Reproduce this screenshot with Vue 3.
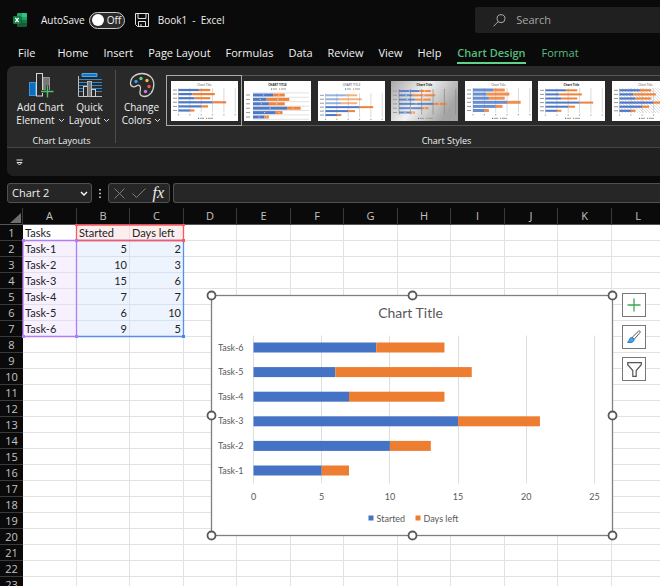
<script setup>
import { ref } from 'vue'

const tabs = ['File', 'Home', 'Insert', 'Page Layout', 'Formulas', 'Data', 'Review', 'View', 'Help', 'Chart Design', 'Format']
const activeTab = ref('Chart Design')
const autoSave = ref(false)

const tasks = [
  { name: 'Task-1', started: 5, left: 2 },
  { name: 'Task-2', started: 10, left: 3 },
  { name: 'Task-3', started: 15, left: 6 },
  { name: 'Task-4', started: 7, left: 7 },
  { name: 'Task-5', started: 6, left: 10 },
  { name: 'Task-6', started: 9, left: 5 },
]
const topDown = [...tasks].reverse()

const columns = 'ABCDEFGHIJKL'.split('')
const rowCount = 23

function cellText(row, col) {
  if (row === 1) return ['Tasks', 'Started', 'Days left'][col] ?? ''
  const task = tasks[row - 2]
  if (!task) return ''
  return [task.name, task.started, task.left][col] ?? ''
}

function cellClass(row, col) {
  return {
    number: row > 1 && (col === 1 || col === 2),
    series: row === 1 && (col === 1 || col === 2),
    category: row > 1 && row < 8 && col === 0,
    values: row > 1 && row < 8 && (col === 1 || col === 2),
  }
}

const unit = 13.64
const ticks = [0, 5, 10, 15, 20, 25]
const handles = [[0, 0], [201, 0], [401, 0], [0, 120], [401, 120], [0, 240], [201, 240], [401, 240]]

const styles = [
  { id: 1, title: 'Chart Title', top: 9, pitch: 4.1, bar: 2.2, x: 7.5, axis: true },
  { id: 2, title: 'CHART TITLE', top: 14, pitch: 4.4, bar: 3, x: 9, bold: true, legendTop: true, rules: true, labels: true },
  { id: 3, title: 'CHART TITLE', top: 14.3, pitch: 3.95, bar: 2, x: 7.5, legendTop: true, axis: true, pale: true },
  { id: 4, title: 'Chart Title', top: 10, pitch: 4.3, bar: 2, x: 8, bold: true, dark: true, labels: true },
  { id: 5, title: 'Chart Title', top: 9, pitch: 4.1, bar: 3, x: 8, axis: true, soft: true },
  { id: 6, title: 'Chart Title', top: 9.3, pitch: 4.1, bar: 2, x: 7.5, bold: true, axis: true },
  { id: 7, title: 'Chart Title', top: 9.3, pitch: 4.1, bar: 2.2, x: 7.5, axis: true, hatch: true },
  { id: 8, title: 'Chart Title', top: 9, pitch: 4.1, bar: 2.2, x: 7.5, axis: true },
]
const activeStyle = ref(1)
</script>

<template>
  <div class="window">
    <header class="titlebar">
      <svg class="app-icon" width="15" height="14" viewBox="0 0 15 14" aria-hidden="true">
        <rect x="4" y="0" width="10" height="14" rx="1" fill="#185c37" />
        <path d="M5 0h4v4H4V1z" fill="#21a366" />
        <path d="M9 0h4a1 1 0 0 1 1 1v3H9z" fill="#33c481" />
        <path d="M4 4h5v3H4z" fill="#107c41" />
        <path d="M9 4h5v3H9z" fill="#21a366" />
        <path d="M9 7h5v3H9z" fill="#107c41" />
        <rect x="0" y="3" width="8" height="8" rx="1" fill="#107c41" />
        <path d="M2.3 4.8l3.4 4.4M5.7 4.8L2.3 9.2" stroke="#fff" stroke-width="1.3" />
      </svg>
      <label class="autosave">
        <span>AutoSave</span>
        <input v-model="autoSave" type="checkbox" />
        <span class="switch"><i></i>{{ autoSave ? 'On' : 'Off' }}</span>
      </label>
      <button class="plain save" aria-label="Save">
        <svg width="14" height="14" viewBox="0 0 14 14" fill="none" stroke="#e2e2e2">
          <path d="M.5 .5h13v13h-11l-2-2zM3 .5v5h8v-5M3.5 13.5v-5h7v5M6 13.5v-2.5" />
        </svg>
      </button>
      <span class="doc">Book1&nbsp; -&nbsp; Excel</span>
      <label class="search">
        <svg width="13" height="13" viewBox="0 0 13 13" fill="none" stroke="#a8a8a8">
          <circle cx="8" cy="4.7" r="4" /><path d="M5.2 7.6L.6 12.3" />
        </svg>
        <input type="search" placeholder="Search" aria-label="Search" />
      </label>
    </header>

    <nav class="tabs">
      <button
        v-for="tab in tabs"
        :key="tab"
        class="plain tab"
        :class="{ active: tab === activeTab, contextual: tab === 'Chart Design' || tab === 'Format' }"
        @click="activeTab = tab"
      >{{ tab }}</button>
    </nav>

    <section class="ribbon">
      <div class="commands">
        <div class="group layouts">
          <div class="tools">
            <button class="plain tool">
              <svg width="26" height="26" viewBox="0 0 26 26" fill="none">
                <rect x="1.5" y="10.5" width="6" height="13" fill="#0f6cbd" stroke="#3a96dd" />
                <path d="M15 5.5h6.5V18H15z" fill="#777" stroke="#999" />
                <rect x="8.5" y="1.5" width="6" height="22.5" fill="#292929" stroke="#d6d6d6" />
                <path d="M19.5 13.5v12M13 19.5h12.5" stroke="#292929" stroke-width="3" />
                <path d="M19.5 13.5v12M13 19.5h12.5" stroke="#4fc26b" stroke-width="1.4" />
              </svg>
              <span>Add Chart</span>
              <span>Element <svg class="caret" width="7" height="5" viewBox="0 0 7 5"><path d="M1 1l2.5 2.5L6 1" /></svg></span>
            </button>
            <button class="plain tool">
              <svg width="26" height="26" viewBox="0 0 26 26" fill="none">
                <path d="M5 1.5h15v3H5z" fill="#1476c6" stroke="#55a9e8" />
                <path d="M2 7.5h23M2 10.5h23M2 13.5h23M2 16.5h23M2 19.5h23" stroke="#3288cf" />
                <path d="M1.5 4v20.5H25" stroke="#bdbdbd" />
                <rect x="6.5" y="14.5" width="4" height="10" fill="#292929" stroke="#cfcfcf" />
                <rect x="10.5" y="9.5" width="4" height="15" fill="#777" stroke="#b5b5b5" />
                <rect x="14.5" y="17.5" width="4" height="7" fill="#292929" stroke="#cfcfcf" />
              </svg>
              <span>Quick</span>
              <span>Layout <svg class="caret" width="7" height="5" viewBox="0 0 7 5"><path d="M1 1l2.5 2.5L6 1" /></svg></span>
            </button>
          </div>
          <p class="caption">Chart Layouts</p>
        </div>

        <div class="group styles">
          <div class="tools">
            <button class="plain tool">
              <svg width="26" height="26" viewBox="0 0 26 26" fill="none">
                <path d="M1.5 11.5C1.5 5.5 6.5 1.5 13 1.5S24.8 6 24.8 12.5c0 7-4.3 12-9.3 12-3.5 0-5-2-4.5-5 .5-2.8 1.5-4.2-.5-6-1.8-1.5-3.5 1.5-5.8 1.3-2-.2-3.2-1.3-3.2-3.3z" stroke="#d0d0d0" stroke-width="1.3" />
                <circle cx="7" cy="9.5" r="1.7" fill="#3a9bf0" />
                <circle cx="12" cy="6.5" r="1.7" fill="#5fd777" />
                <circle cx="18" cy="8.5" r="1.7" fill="#f7b84b" />
                <circle cx="20" cy="14.5" r="1.7" fill="#f0524f" />
                <circle cx="16.5" cy="19.5" r="1.7" fill="#c77ddb" />
              </svg>
              <span>Change</span>
              <span>Colors <svg class="caret" width="7" height="5" viewBox="0 0 7 5"><path d="M1 1l2.5 2.5L6 1" /></svg></span>
            </button>
            <div class="gallery">
              <button
                v-for="s in styles"
                :key="s.id"
                class="plain thumb"
                :class="{ chosen: s.id === activeStyle }"
                :aria-label="'Style ' + s.id"
                @click="activeStyle = s.id"
              >
                <svg width="67" height="40" viewBox="0 0 67 40">
                  <defs v-if="s.dark || s.hatch">
                    <linearGradient v-if="s.dark" id="metal" x1="0" y1="0" x2="1" y2="0.4">
                      <stop offset="0" stop-color="#a8a8a8" /><stop offset=".5" stop-color="#f2f2f2" /><stop offset="1" stop-color="#a4a4a4" />
                    </linearGradient>
                    <pattern v-if="s.hatch" id="hatch" width="3" height="3" patternUnits="userSpaceOnUse">
                      <path d="M0 0l3 3" stroke="#c4c4c4" stroke-width=".6" />
                    </pattern>
                  </defs>
                  <rect width="67" height="40" :fill="s.dark ? 'url(#metal)' : '#fff'" />
                  <rect v-if="s.hatch" x="7.5" y="7" width="59" height="25" fill="url(#hatch)" />
                  <text x="33.5" y="4.5" text-anchor="middle" class="thumb-title" :class="{ bold: s.bold }">{{ s.title }}</text>
                  <g v-if="s.rules" stroke="#d5d5d5" stroke-width=".7">
                    <path v-for="n in 7" :key="n" :d="`M9 ${7.5 + n * 4.4}h56`" />
                  </g>
                  <g v-else :stroke="s.dark ? '#888' : '#c8c8c8'" stroke-width=".7">
                    <path v-for="t in ticks" :key="t" :d="`M${s.x + t * 2.27} ${s.top - 2}V${s.top + s.pitch * 5 + 2}`" />
                  </g>
                  <g v-for="(t, i) in topDown" :key="t.name">
                    <rect x="2" :y="s.top + i * s.pitch - 0.5" width="4" height="1" fill="#999" />
                    <rect :x="s.x" :y="s.top + i * s.pitch - s.bar / 2" :width="t.started * 2.27" :height="s.bar" fill="#4472c4" :opacity="s.pale && i < 3 ? 0.55 : s.soft || s.dark ? 0.8 : 0.95" />
                    <rect :x="s.x + t.started * 2.27" :y="s.top + i * s.pitch - s.bar / 2" :width="t.left * 2.27" :height="s.bar" fill="#ed7d31" :opacity="s.pale && i < 3 ? 0.6 : s.soft || s.dark ? 0.85 : 0.95" />
                    <g v-if="s.labels" fill="#fff" opacity=".7">
                      <rect :x="s.x + t.started * 1.1" :y="s.top + i * s.pitch - 0.5" width="1.2" height="1" />
                      <rect :x="s.x + (t.started + t.left / 2) * 2.2" :y="s.top + i * s.pitch - 0.5" width="1.2" height="1" />
                    </g>
                  </g>
                  <g v-if="s.axis" fill="#999">
                    <rect v-for="t in ticks" :key="t" :x="s.x - 0.6 + t * 2.27" :y="s.top + s.pitch * 5 + 3.7" width="1.2" height="1.1" />
                  </g>
                  <g :transform="`translate(0 ${s.legendTop ? 7.5 : 36.8})`">
                    <rect x="27" width="1.2" height="1.2" fill="#4472c4" /><rect x="29" width="4" height="1" fill="#999" />
                    <rect x="35" width="1.2" height="1.2" fill="#ed7d31" /><rect x="37" width="5" height="1" fill="#999" />
                  </g>
                </svg>
              </button>
            </div>
          </div>
          <p class="caption">Chart Styles</p>
        </div>
      </div>
      <div class="quickbar">
        <button class="plain" aria-label="Customize Quick Access Toolbar">
          <svg width="7" height="7" viewBox="0 0 7 7" fill="none" stroke="#e6e6e6"><path d="M.5 1h6M1 3.5L3.5 6 6 3.5z" /></svg>
        </button>
      </div>
    </section>

    <section class="formula-row">
      <div class="namebox">
        <select aria-label="Name box"><option>Chart 2</option></select>
        <svg width="8" height="6" viewBox="0 0 8 6"><path d="M1 1l3 3 3-3" fill="none" stroke="#fff" stroke-width="1.4" /></svg>
      </div>
      <svg class="dots" width="2" height="9" viewBox="0 0 2 9" fill="#bbb"><path d="M0 0h2v1.5H0zM0 3.7h2v1.5H0zM0 7.4h2v1.5H0z" /></svg>
      <div class="entry">
        <button class="plain" aria-label="Cancel"><svg width="11" height="11" viewBox="0 0 11 11" fill="none" stroke="#7c7c7c"><path d="M.5 .5l10 10M10.5 .5l-10 10" /></svg></button>
        <button class="plain" aria-label="Enter"><svg width="14" height="11" viewBox="0 0 14 11" fill="none" stroke="#7c7c7c"><path d="M.5 5.5l4 4 9-9" /></svg></button>
        <button class="plain fx" aria-label="Insert function">fx</button>
      </div>
      <input class="formula" type="text" aria-label="Formula bar" />
    </section>

    <main class="sheet">
      <table>
        <colgroup>
          <col class="rowhead" />
          <col v-for="c in columns" :key="c" class="column" />
        </colgroup>
        <thead>
          <tr>
            <th class="corner"><svg width="11" height="10" viewBox="0 0 11 10"><path d="M11 0v10H0z" fill="#6e6e6e" /></svg></th>
            <th v-for="c in columns" :key="c" scope="col">{{ c }}</th>
          </tr>
        </thead>
        <tbody>
          <tr v-for="r in rowCount" :key="r">
            <th scope="row">{{ r }}</th>
            <td v-for="(c, i) in columns" :key="c" :class="cellClass(r, i)">{{ cellText(r, i) }}</td>
          </tr>
        </tbody>
      </table>

      <svg class="ranges" width="166" height="116" viewBox="0 0 166 116" fill="none">
        <path d="M56 16.5h107.5V112.5H56" stroke="#5b8def" stroke-width="1.3" />
        <path d="M3 16.5h53.5V112.5H3z" stroke="#b27cf5" stroke-width="1.3" />
        <path d="M56.5 1v15.5h107V1z" stroke="#ff5560" stroke-width="1.3" />
        <g fill="#ff5560"><path d="M55 0h3v2h-3zM162 0h3v2h-3zM162 15h3v3h-3z" /></g>
        <g fill="#b27cf5"><path d="M55 15h3v3h-3zM2 15h3v3H2zM55 111h3v3h-3zM2 111h3v3H2z" /></g>
        <path d="M162 111h3v3h-3z" fill="#4a86f0" />
      </svg>

      <div class="chart">
        <svg width="412" height="251" viewBox="-5.5 -5.5 412 251" role="img" aria-label="Chart Title">
          <rect width="401" height="240" fill="#fff" stroke="#7f7f7f" stroke-width="1.3" />
          <text x="199" y="22" class="chart-title">Chart Title</text>
          <g stroke="#dedede">
            <path v-for="t in ticks" :key="t" :d="`M${Math.round(42 + t * unit)} 40V188`" />
          </g>
          <g v-for="(t, i) in topDown" :key="t.name">
            <text x="32" :y="55 + i * 24.6" class="end">{{ t.name }}</text>
            <rect x="42" :y="47 + i * 24.6" :width="t.started * unit" height="10" fill="#4472c4" />
            <rect :x="42 + t.started * unit" :y="47 + i * 24.6" :width="t.left * unit" height="10" fill="#ed7d31" />
          </g>
          <text v-for="t in ticks" :key="t" :x="42 + t * unit" y="204" class="middle">{{ t }}</text>
          <rect x="157" y="220" width="5" height="5" fill="#4472c4" />
          <text x="165" y="226">Started</text>
          <rect x="204" y="220" width="5" height="5" fill="#ed7d31" />
          <text x="212" y="226">Days left</text>
          <g fill="#fff" stroke="#595959" stroke-width="1.8">
            <circle v-for="(h, i) in handles" :key="i" :cx="h[0]" :cy="h[1]" r="4" />
          </g>
        </svg>
        <div class="side">
          <button aria-label="Chart Elements"><svg width="14" height="14" viewBox="0 0 14 14"><path d="M7 .5v13M.5 7h13" stroke="#3fa757" stroke-width="1.3" /></svg></button>
          <button aria-label="Chart Styles">
            <svg width="14" height="14" viewBox="0 0 14 14" fill="none">
              <path d="M5.3 7.2L11.5 1.2c1-.8 2.2.2 1.5 1.3L7.3 9.2z" fill="#fff" stroke="#555" />
              <path d="M.5 12.2c1.5-.3 1.4-1.5 1.9-2.9.7-1.7 2.7-2.3 3.9-1 1.2 1.4.6 3.2-1 3.8-1.5.6-3.3.5-4.8.1z" fill="#4ba3e8" stroke="#1b73bd" />
            </svg>
          </button>
          <button aria-label="Chart Filters"><svg width="15" height="15" viewBox="0 0 15 15"><path d="M.7 .7h13.6v2L9.2 8.5v5.8H5.8V8.5L.7 2.7z" fill="#fff" stroke="#555" stroke-width="1.2" /></svg></button>
        </div>
      </div>
    </main>
  </div>
</template>

<style>
body { background: #0a0a0a; }
</style>

<style scoped>
* { box-sizing: border-box; }
.window {
  display: flex; flex-direction: column; height: 100vh; overflow: hidden;
  background: #0a0a0a; color: #f0f0f0; font: 11px/14px "Open Sans", "Noto Sans", sans-serif;
}
button, input, select { font: inherit; color: inherit; }
svg { display: block; }
.plain { border: 0; padding: 0; background: none; }

.titlebar { display: flex; align-items: center; flex: none; height: 40px; }
.app-icon { margin: 0 13px; }
.autosave { position: relative; display: flex; align-items: center; gap: 4px; font-size: 10px; }
.autosave input { position: absolute; right: 0; width: 36px; height: 17px; margin: 0; opacity: 0; }
.switch { display: flex; align-items: center; gap: 3px; width: 36px; height: 17px; padding-left: 2px; border: 1px solid #ccc; border-radius: 9px; background: #2b2b2b; }
.switch i { width: 12px; height: 12px; border-radius: 50%; background: #fff; }
.save { margin: 0 9px 0 10px; }
.doc { font-size: 10px; white-space: pre; }
.search { display: flex; flex: 0 0 28%; align-items: center; gap: 10px; height: 26px; margin-left: auto; padding-left: 18px; border-radius: 3px 0 0 3px; background: #202020; }
.search input { flex: 1; min-width: 0; padding: 0; border: 0; background: none; outline: 0; }
.search input::placeholder { color: #a6a6a6; opacity: 1; }

.tabs { display: flex; flex: none; gap: 15px; height: 26px; padding: 4px 0 0 18px; }
.tab { height: 20px; white-space: nowrap; border-bottom: 2px solid transparent; }
.tab:first-child { margin-right: 7px; }
.contextual { color: #58bd7d; }
.active { margin: 0 1px; font-weight: 600; border-bottom-color: #5fd38a; }

.ribbon { flex: none; margin-left: 7px; border-radius: 7px 0 0 7px; overflow: hidden; background: #292929; }
.commands { display: flex; height: 82px; border-bottom: 1px solid #444; }
.group { display: flex; flex: none; flex-direction: column; justify-content: space-between; }
.layouts { position: relative; width: 109px; }
.layouts::after { content: ""; position: absolute; right: 0; top: 4px; bottom: 4px; width: 1px; background: #4d4d4d; }
.styles { width: 660px; padding-left: 1px; }
.tools { display: flex; }
.tool { display: flex; flex: none; flex-direction: column; align-items: center; width: 49px; padding-top: 6px; line-height: 13px; white-space: nowrap; font-size: 10px; }
.layouts .tools { padding-left: 9px; }
.tool > span { display: flex; align-items: center; gap: 3px; }
.tool > svg { margin-bottom: 3px; }
.caret path { fill: none; stroke: #e0e0e0; }
.caption { margin: 0; text-align: center; font-size: 9px; line-height: 13px; }
.gallery { display: grid; grid-auto-flow: column; grid-auto-columns: 74px 73px; height: 51px; margin-top: 9px; padding-right: 18px; border: 1px solid #555; border-radius: 2px; }
.thumb { display: grid; place-items: center; }
.chosen { outline: 1px solid #aaa; }
.thumb-title { font-size: 3px; fill: #444; }
.bold { font-weight: 700; fill: #222; }
.quickbar { display: flex; align-items: center; height: 28px; padding-left: 9px; background: #1f1f1f; }

.formula-row { display: flex; align-items: center; flex: none; height: 32px; padding: 3px 0 1px 7px; }
.namebox { position: relative; flex: none; width: 85px; height: 20px; }
.namebox select { width: 100%; height: 100%; padding: 0 4px; appearance: none; border: 1px solid #505050; border-radius: 3px; background: #262626; }
.namebox svg { position: absolute; right: 4px; top: 8px; pointer-events: none; }
.dots { margin: 0 7px; }
.entry { display: flex; flex: none; align-items: center; justify-content: space-between; width: 62px; height: 20px; margin-right: 3px; padding: 0 5px; border: 1px solid #505050; border-radius: 3px; background: #262626; }
.fx { font: italic 400 16px/16px "Liberation Serif", serif; }
.formula { flex: 1; min-width: 0; height: 20px; border: 1px solid #505050; border-right: 0; border-radius: 3px 0 0 3px; background: #262626; }

.sheet { position: relative; flex: 1; min-height: 0; overflow: hidden; background: #fff; color: #222; font-family: Lato, "Open Sans", sans-serif; }
table { width: 100%; table-layout: fixed; border-collapse: separate; border-spacing: 0; }
.rowhead { width: 23px; }
.column { width: 53px; }
.column:nth-child(even) { width: 54px; }
th { height: 16px; padding: 0; background: #0a0a0a; color: #c4c4c4; font: 11px/15px "Open Sans", sans-serif; border-bottom: 1px solid #3a3a3a; }
thead th { height: 17px; line-height: 16px; border-right: 1px solid #3a3a3a; border-bottom-color: #555; }
.corner svg { margin: 3px 0 0 10px; }
td { height: 16px; padding: 0 2px; font-size: 11px; line-height: 15px; white-space: nowrap; border-right: 1px solid #e2e2e2; border-bottom: 1px solid #e2e2e2; }
.number { text-align: right; }
.series { background: #fdeeee; border-color: #f0dede; }
.category { background: #f7f1fe; border-color: #e4dcef; }
.values { background: #edf4fe; border-color: #d8e1ee; }
.ranges { position: absolute; left: 20px; top: 16px; pointer-events: none; }

.chart { position: absolute; left: 206px; top: 82px; display: flex; gap: 4px; }
.chart text { font-size: 9px; fill: #595959; }
.chart .chart-title { font-size: 14px; text-anchor: middle; }
.chart .end { text-anchor: end; }
.chart .middle { text-anchor: middle; }
.side { display: flex; flex-direction: column; gap: 8px; padding-top: 3px; }
.side button { display: grid; place-items: center; width: 24px; height: 24px; padding: 0; border: 1px solid #777; background: #fff; }
</style>
